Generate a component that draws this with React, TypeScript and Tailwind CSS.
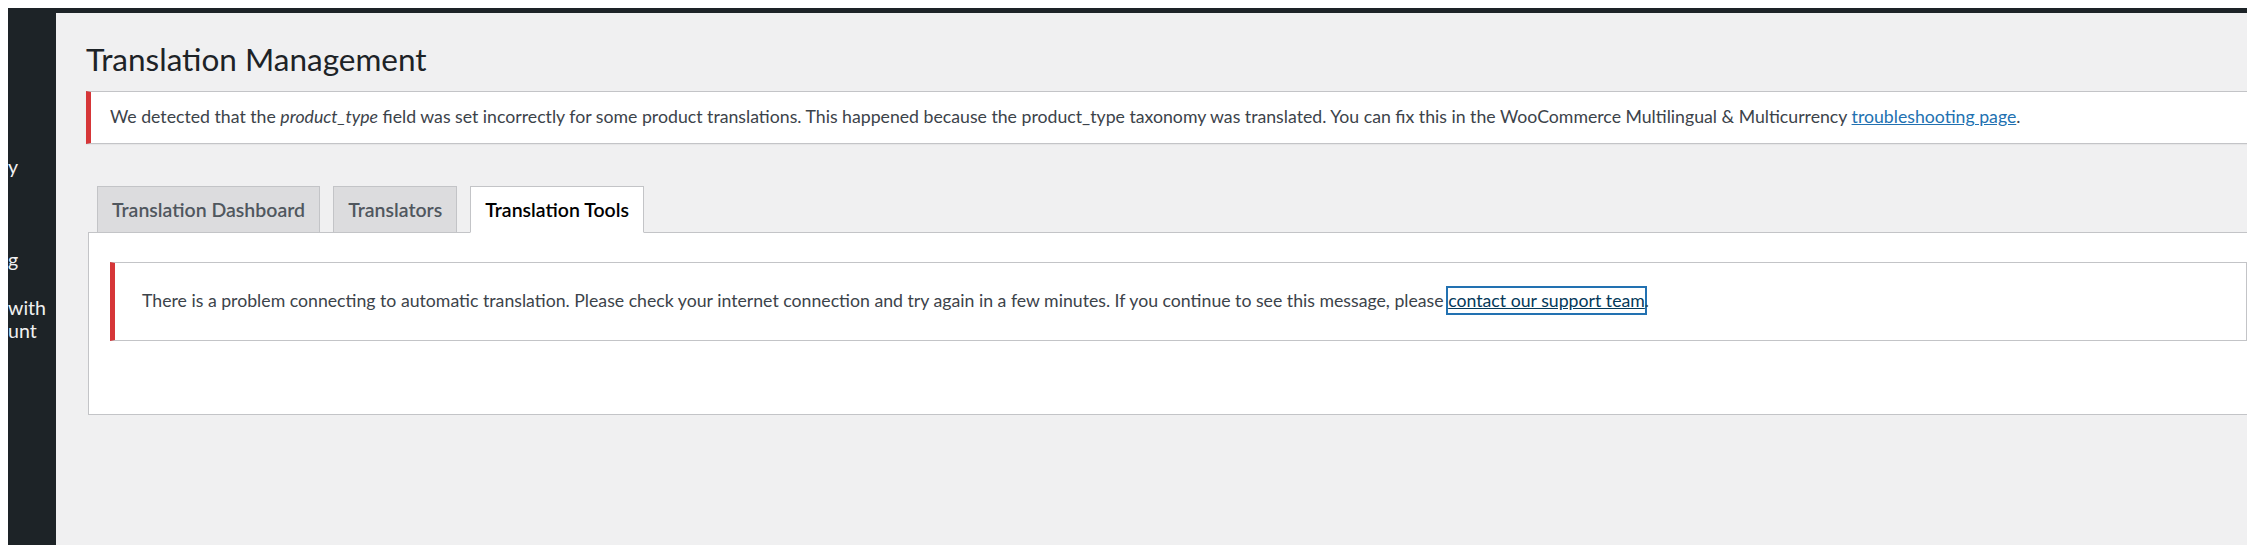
const FONT = "font-['Lato','Segoe_UI',sans-serif]";

// only the ends of the menu labels show; the rest of the admin menu is scrolled out of view
const SIDEBAR_LINES = [
  { text: "y", top: "mt-[142px]" },
  { text: "g", top: "mt-[70px]" },
  { text: "with", top: "mt-[25px]" },
  { text: "unt", top: "mt-0" },
];

const TABS = [
  { label: "Translation Dashboard", active: false },
  { label: "Translators", active: false },
  { label: "Translation Tools", active: true },
];

function Sidebar() {
  return (
    <div className="w-[48px] shrink-0 overflow-hidden bg-[#1d2327] text-[19.6px] leading-[23px] text-[#f0f0f1]">
      {SIDEBAR_LINES.map(line => (
        <div key={line.text} className={`whitespace-nowrap ${line.top}`}>
          {line.text}
        </div>
      ))}
    </div>
  );
}

function Tabs() {
  return (
    <div className="flex items-end gap-[13px] pl-[11px]">
      {TABS.map(tab => (
        <div
          key={tab.label}
          className={
            tab.active
              ? "relative z-10 -mb-px border border-[#c3c4c7] border-b-white bg-white px-[14px] text-[19.5px] font-semibold leading-[45px] text-black"
              : "-mb-px border border-[#c3c4c7] bg-[#dcdcde] px-[14px] text-[19.5px] font-semibold leading-[45px] text-[#50575e]"
          }
        >
          {tab.label}
        </div>
      ))}
    </div>
  );
}

export default function App() {
  return (
    <div className={`${FONT} h-[553px] w-[2255px] bg-white p-2`}>
      <div className="flex h-full flex-col">
        <div className="h-[5px] shrink-0 bg-[#1d2327]" />
        <div className="flex min-h-0 flex-1">
          <Sidebar />
          <main className="flex-1 overflow-hidden bg-[#f0f0f1] pl-[30px]">
            <div className="w-[2185px]">
              {/* Header */}
              <h1 className="pt-[25px] text-[31.5px] font-normal leading-[42px] text-[#1d2327]">
                Translation Management
              </h1>

              {/* Product type notice */}
              <div className="mt-[11px] flex h-[53px] items-center border border-l-[5px] border-[#c3c4c7] border-l-[#d63638] bg-white pl-[19px] text-[17.7px] text-[#3c434a] shadow-[0_1px_1px_rgba(0,0,0,0.04)]">
                <p>
                  We detected that the <em>product_type</em> field was set incorrectly for some product translations.
                  This happened because the product_type taxonomy was translated. You can fix this in the WooCommerce
                  Multilingual &amp; Multicurrency{" "}
                  <a href="#" className="text-[#2271b1] underline">
                    troubleshooting page
                  </a>
                  .
                </p>
              </div>

              {/* Tabs + panel */}
              <div className="mt-[42px]">
                <Tabs />
                <div className="ml-[2px] border border-[#c3c4c7] bg-white px-[21px] pb-[73px] pt-[29px]">
                  <div className="flex h-[79px] w-[2137px] items-center border border-l-[5px] border-[#c3c4c7] border-l-[#d63638] bg-white pl-[27px] text-[17.7px] text-[#3c434a]">
                    <p>
                      There is a problem connecting to automatic translation. Please check your internet connection and try
                      again in a few minutes. If you continue to see this message, please{" "}
                      <a
                        href="#"
                        className="py-[2px] text-[#043959] underline shadow-[0_0_0_2px_#2271b1]"
                      >
                        contact our support team
                      </a>
                      .
                    </p>
                  </div>
                </div>
              </div>
            </div>
          </main>
        </div>
      </div>
    </div>
  );
}
